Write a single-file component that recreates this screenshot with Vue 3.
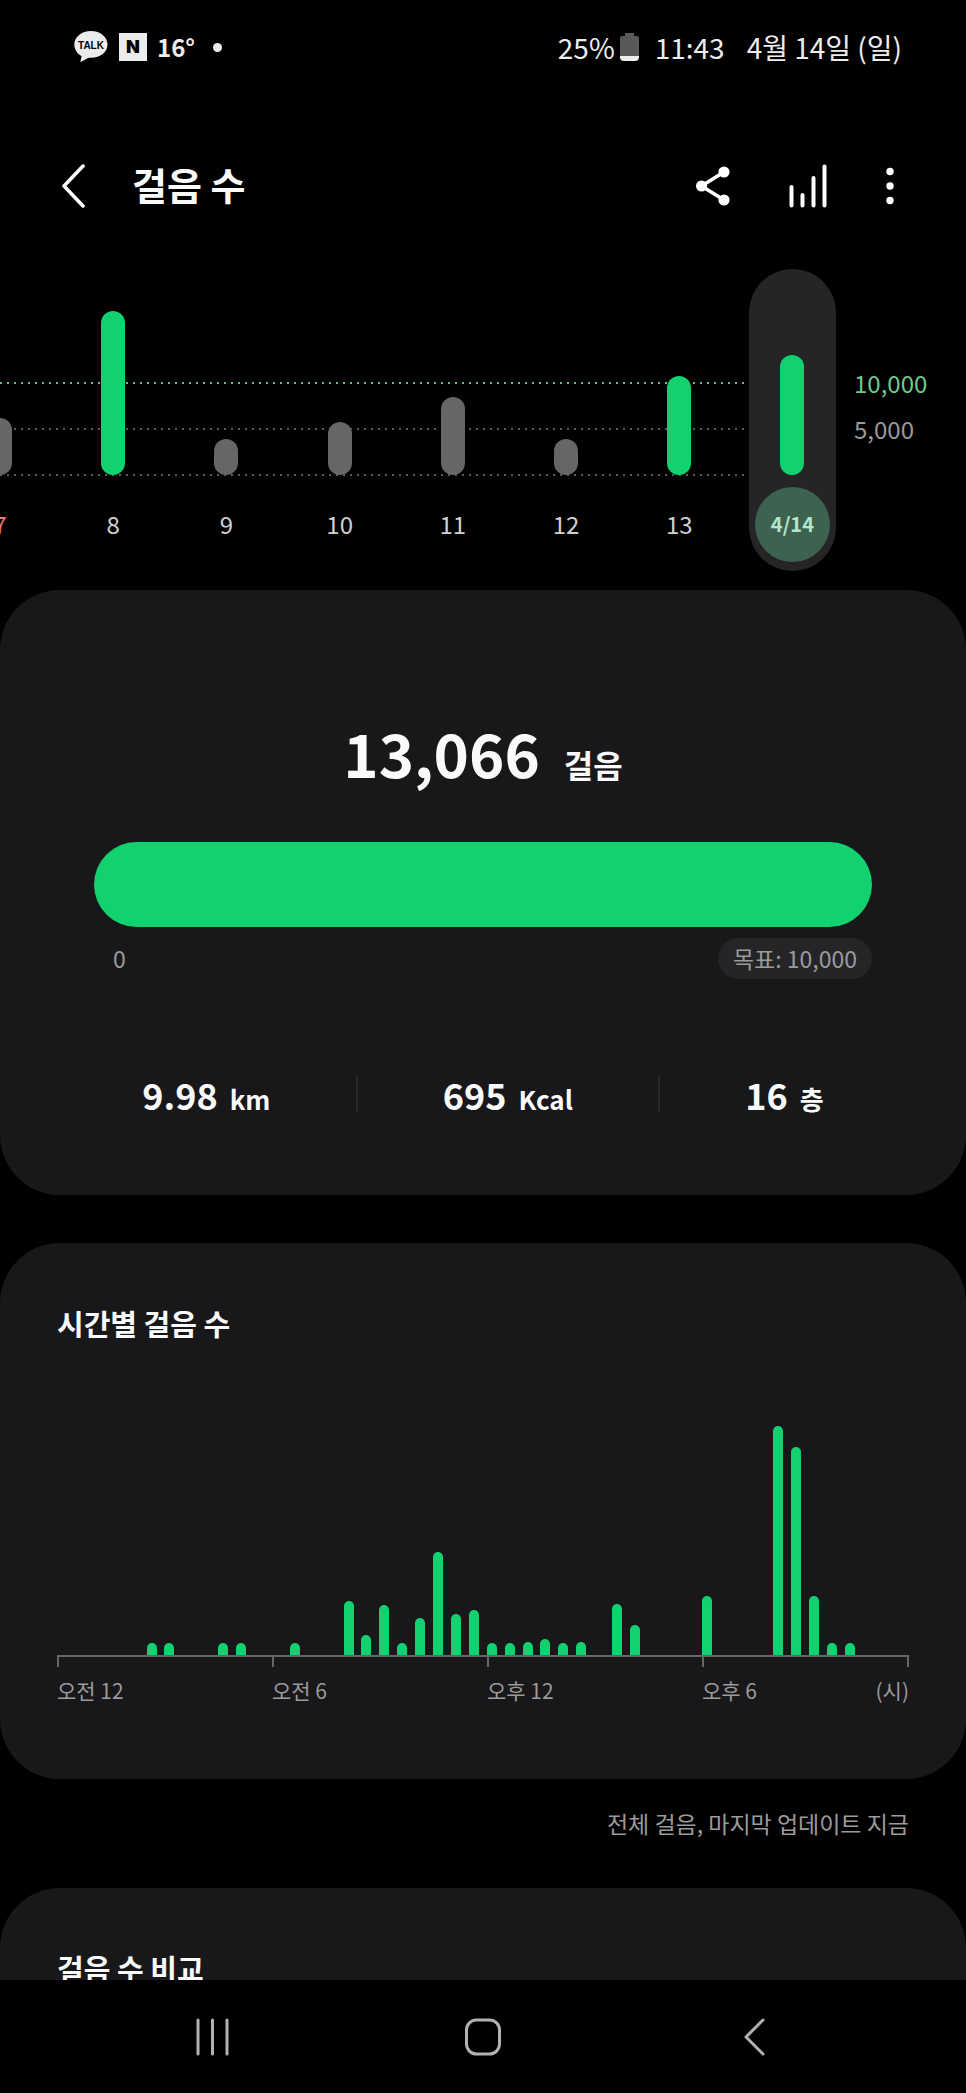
<script setup>
import { ref } from 'vue'

const days = [
  { label: '7', height: 57, sunday: true },
  { label: '8', height: 164, reached: true },
  { label: '9', height: 36 },
  { label: '10', height: 53 },
  { label: '11', height: 78 },
  { label: '12', height: 36 },
  { label: '13', height: 99, reached: true },
  { label: '4/14', height: 120, reached: true },
]
const selected = ref('4/14')

const stats = [
  { value: '9.98', unit: 'km' },
  { value: '695', unit: 'Kcal' },
  { value: '16', unit: '층' },
]

// One entry per half hour, midnight to midnight.
const halfHours = [
  0, 0, 0, 0, 0, 12, 12, 0, 0, 12, 12, 0,
  0, 12, 0, 0, 54, 20, 50, 12, 37, 103, 41, 45,
  12, 12, 13, 16, 12, 13, 0, 51, 30, 0, 0, 0,
  59, 0, 0, 0, 229, 208, 59, 12, 12, 0, 0, 0,
]
const hourLabels = ['오전 12', '오전 6', '오후 12', '오후 6']
</script>

<template>
  <div class="screen">
    <div class="status">
      <div class="status-left">
        <svg class="talk" viewBox="0 0 34 32" aria-hidden="true">
          <path d="M17 0C7.500 0 .3 5.900.3 13.600c0 5 2.900 9.200 7.300 11.600L6.300 31.200l8.300-4.500c.8.1 1.600.1 2.400.1 9.500 0 16.500-5.800 16.500-13.200S26.500 0 17 0Z" fill="#ececec" />
          <text x="17" y="18" text-anchor="middle">TALK</text>
        </svg>
        <span class="naver">N</span>
        <strong class="temp">16°</strong>
        <span class="dot"></span>
      </div>
      <div class="status-right">
        <span>25%</span>
        <svg class="battery" viewBox="0 0 19 28" aria-hidden="true">
          <path d="M5 0h9v3h3q2 0 2 2v18H0V5q0-2 2-2h3Z" fill="#595959" />
          <path d="M0 23h19v1q0 4-4 4H4q-4 0-4-4Z" fill="#ededed" />
        </svg>
        <span class="time">11:43</span>
        <span>4월 14일 (일)</span>
      </div>
    </div>

    <header class="top">
      <button class="icon-button" aria-label="뒤로">
        <svg width="24" height="46" viewBox="0 0 24 46"><path d="M22 3 3 23 22 43" fill="none" stroke="#fff" stroke-width="3.500" stroke-linecap="round" stroke-linejoin="round" /></svg>
      </button>
      <h1>걸음 수</h1>
      <div class="actions">
        <button class="icon-button" aria-label="공유">
          <svg width="34" height="40" viewBox="0 0 34 40">
            <path d="M28 6 5.500 20 28 34" fill="none" stroke="#fff" stroke-width="3.600" />
            <g fill="#fff"><circle cx="28" cy="6" r="5.600" /><circle cx="5.600" cy="20" r="5.600" /><circle cx="28" cy="34" r="5.600" /></g>
          </svg>
        </button>
        <button class="icon-button" aria-label="차트">
          <svg width="38" height="44" viewBox="0 0 38 44"><path d="M2.500 23v18.500M13.500 31v10.500M24.500 14v27.500M35.500 2.500v39" stroke="#fff" stroke-width="4" stroke-linecap="round" /></svg>
        </button>
        <button class="icon-button" aria-label="더보기">
          <svg width="8" height="38" viewBox="0 0 8 38" fill="#fff"><circle cx="4" cy="4.500" r="3.700" /><circle cx="4" cy="19" r="3.700" /><circle cx="4" cy="33.500" r="3.700" /></svg>
        </button>
      </div>
    </header>

    <section class="week">
      <div class="plot">
        <div class="guides"><i class="goal"></i><i></i><i></i></div>
        <button
          v-for="day in days"
          :key="day.label"
          class="day"
          :class="{ reached: day.reached, sunday: day.sunday, selected: day.label === selected }"
          @click="selected = day.label"
        >
          <span class="bar" :style="{ height: day.height + 'px' }"></span>
          <span class="date">{{ day.label }}</span>
        </button>
      </div>
      <div class="scale"><span class="goal-label">10,000</span><span>5,000</span></div>
    </section>

    <main>
      <section class="card summary">
        <p class="total"><strong>13,066</strong><span>걸음</span></p>
        <div class="progress"></div>
        <div class="range"><span class="zero">0</span><span class="target">목표: 10,000</span></div>
        <div class="stats">
          <p v-for="stat in stats" :key="stat.unit"><strong>{{ stat.value }}</strong><span>{{ stat.unit }}</span></p>
        </div>
      </section>

      <section class="card hourly">
        <h2>시간별 걸음 수</h2>
        <div class="bars">
          <span v-for="(h, i) in halfHours" :key="i" :style="{ height: h + 'px' }"></span>
        </div>
        <div class="axis">
          <span v-for="label in hourLabels" :key="label">{{ label }}</span>
          <span class="unit">(시)</span>
        </div>
      </section>

      <p class="updated">전체 걸음, 마지막 업데이트 지금</p>

      <section class="card compare"><h2>걸음 수 비교</h2></section>
    </main>

    <nav class="system">
      <button class="icon-button" aria-label="최근 앱">
        <svg width="34" height="40" viewBox="0 0 34 40"><path d="M3 3v34M17.500 3v34M32 3v34" stroke="#b2b2b2" stroke-width="3" stroke-linecap="round" /></svg>
      </button>
      <button class="icon-button" aria-label="홈">
        <svg width="40" height="40" viewBox="0 0 40 40"><rect x="3.500" y="3" width="33" height="34" rx="10" fill="none" stroke="#b2b2b2" stroke-width="3" /></svg>
      </button>
      <button class="icon-button" aria-label="뒤로 가기">
        <svg width="22" height="40" viewBox="0 0 22 40"><path d="M20 3 3 20 20 37" fill="none" stroke="#b2b2b2" stroke-width="3" stroke-linecap="round" stroke-linejoin="round" /></svg>
      </button>
    </nav>
  </div>
</template>

<style>
body {
  background: #000;
}
</style>

<style scoped>
.screen {
  display: flex;
  flex-direction: column;
  height: 100vh;
  overflow: hidden;
  background: #000;
  color: #fafafa;
  font-family: 'Noto Sans CJK KR', sans-serif;
}
.screen * {
  box-sizing: border-box;
}
h1, h2, p {
  margin: 0;
}
button {
  font: inherit;
  color: inherit;
  background: none;
  border: 0;
  padding: 0;
  cursor: pointer;
}
.icon-button {
  display: flex;
  align-items: center;
  justify-content: center;
}
svg {
  display: block;
}

.status {
  display: flex;
  flex: none;
  align-items: center;
  justify-content: space-between;
  height: 94px;
  padding: 0 64px 0 74px;
  color: #ededed;
  font-size: 28px;
  line-height: 36px;
}
.status-left,
.status-right {
  display: flex;
  align-items: center;
}
.talk {
  width: 34px;
  height: 32px;
}
.talk text {
  font: 700 10px 'Liberation Sans', sans-serif;
  fill: #000;
}
.naver {
  width: 28px;
  height: 28px;
  margin: 0 10px 0 11px;
  background: #ececec;
  color: #000;
  font: 900 18px/28px Inter, sans-serif;
  text-align: center;
}
.temp {
  font-size: 24px;
}
.dot {
  width: 9px;
  height: 9px;
  margin-left: 18px;
  border-radius: 50%;
  background: #ececec;
}
.battery {
  width: 19px;
  height: 28px;
  margin-left: 5px;
}
.time {
  margin: 0 22px 0 16px;
}

.top {
  display: flex;
  flex: none;
  align-items: center;
  height: 175px;
  padding: 8px 72px 0 61px;
}
h1 {
  margin-left: 47px;
  padding-bottom: 4px;
  font-size: 38px;
  line-height: 48px;
}
.actions {
  display: flex;
  align-items: center;
  gap: 59px;
  margin-left: auto;
}

.week {
  display: flex;
  flex: none;
  height: 302px;
  margin-bottom: 19px;
}
.plot {
  position: relative;
  display: flex;
  flex: 1;
  justify-content: flex-end;
  overflow: hidden;
}
.guides {
  position: absolute;
  inset: 113px 60px auto 0;
  display: grid;
  gap: 44px;
}
.guides i {
  height: 2px;
  background: repeating-linear-gradient(90deg, #5c5c5c 0 2px, transparent 2px 7px);
}
.guides .goal {
  background: repeating-linear-gradient(90deg, #72b98b 0 2px, transparent 2px 7px);
}
.day {
  position: relative;
  display: flex;
  flex: none;
  flex-direction: column;
  align-items: center;
  justify-content: flex-end;
  width: calc(100% / 7.5);
  padding-bottom: 9px;
  color: #d0d0d0;
  font-size: 24px;
}
.bar {
  width: 24px;
  border-radius: 12px;
  background: #666;
}
.reached .bar {
  background: #12d26f;
}
.date {
  display: flex;
  align-items: center;
  justify-content: center;
  width: 75px;
  height: 75px;
  margin-top: 12px;
  padding-bottom: 3px;
  border-radius: 50%;
}
.sunday .date {
  color: #f07868;
}
.selected::before {
  content: '';
  position: absolute;
  inset: 0 13px;
  border-radius: 44px;
  background: #252527;
}
.selected .bar,
.selected .date {
  position: relative;
}
.selected .date {
  background: #3d6250;
  color: #b5e6cd;
  font-size: 20px;
  font-weight: 700;
}
.scale {
  display: flex;
  flex-direction: column;
  gap: 12px;
  width: 117px;
  padding: 97px 0 0 5px;
  color: #9a9a9a;
  font-size: 24px;
  line-height: 34px;
}
.goal-label {
  color: #72c98f;
}

main {
  flex: 1;
  min-height: 0;
  overflow: hidden auto;
  scrollbar-width: none;
}
.card {
  border-radius: 60px;
  background: #18181a;
}
.summary {
  padding: 118px 94px 83px;
}
.total {
  display: flex;
  align-items: baseline;
  justify-content: center;
  gap: 24px;
  height: 88px;
  line-height: 88px;
}
.total strong {
  font-size: 60px;
}
.total span {
  font-size: 32px;
  font-weight: 700;
}
.progress {
  height: 85px;
  margin-top: 46px;
  border-radius: 43px;
  background: #12d26f;
}
.range {
  display: flex;
  align-items: center;
  justify-content: space-between;
  height: 41px;
  margin-top: 11px;
  color: #9b9b9b;
  font-size: 23px;
  line-height: 41px;
}
.zero {
  margin-left: 19px;
}
.target {
  padding: 0 15px;
  border-radius: 21px;
  background: #252527;
}
.stats {
  display: flex;
  margin: 97px -37px 0;
}
.stats p {
  display: flex;
  flex: 1 1 auto;
  align-items: baseline;
  justify-content: center;
  gap: 12px;
  height: 36px;
  line-height: 36px;
}
.stats p + p {
  border-left: 2px solid #29292b;
}
.stats strong {
  font-size: 36px;
}
.stats span {
  font-size: 26px;
  font-weight: 700;
}

.hourly {
  margin-top: 48px;
  padding: 60px 57px 75px;
}
h2 {
  font-size: 29px;
  line-height: 40px;
}
.bars {
  display: flex;
  align-items: flex-end;
  justify-content: space-between;
  height: 312px;
}
.bars span {
  width: 10px;
  border-radius: 5px 5px 0 0;
  background: #12d26f;
}
.axis {
  display: grid;
  grid-template-columns: repeat(3, calc(12 * (100% - 10px) / 47)) 1fr auto;
  border-top: 2px solid #666;
  color: #9b9b9b;
  font-size: 21px;
  line-height: 28px;
}
.axis span::before {
  content: '';
  display: block;
  height: 10px;
  margin-bottom: 9px;
  border-left: 2px solid #666;
}
.axis .unit::before {
  border-left: 0;
  border-right: 2px solid #666;
}
.updated {
  padding: 26px 57px 47px;
  color: #9b9b9b;
  font-size: 23px;
  line-height: 36px;
  text-align: right;
}
.compare {
  padding: 60px 57px;
}

.system {
  display: grid;
  flex: none;
  grid-template-columns: repeat(3, 1fr);
  height: 113px;
  padding: 0 77px;
}
</style>
